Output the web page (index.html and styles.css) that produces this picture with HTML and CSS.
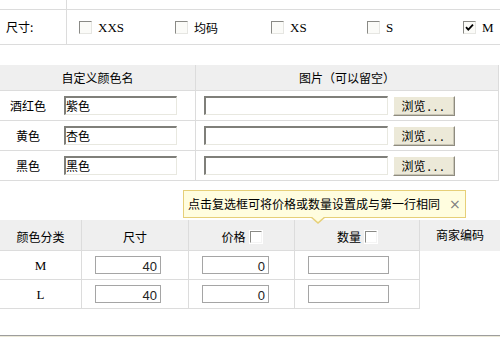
FILE: index.html
```html
<!DOCTYPE html>
<html lang="zh-CN">
<head>
<meta charset="utf-8">
<title>SKU</title>
<link rel="stylesheet" href="styles.css">
</head>
<body>
<div class="size-block">
  <div class="size-row size-row--top">
    <div class="size-label"></div>
    <div class="size-opts"></div>
  </div>
  <div class="size-row size-row--main">
    <div class="size-label">尺寸:</div>
    <div class="size-opts">
      <label class="opt"><span class="cb"></span><span class="latin">XXS</span></label>
      <label class="opt"><span class="cb"></span><span>均码</span></label>
      <label class="opt"><span class="cb"></span><span class="latin">XS</span></label>
      <label class="opt"><span class="cb"></span><span class="latin">S</span></label>
      <label class="opt"><span class="cb"><svg class="tick" width="9" height="9" viewBox="0 0 9 9"><path d="M1 4.2 L3.3 6.6 L8 1.6" fill="none" stroke="#000" stroke-width="1.8"/></svg></span><span class="latin">M</span></label>
    </div>
  </div>
</div>

<div class="color-table">
  <div class="ct-head">自定义颜色名</div>
  <div class="ct-head">图片（可以留空）</div>

  <div class="ct-cell"><span class="name-label">酒红色</span><span class="txt-input">紫色</span></div>
  <div class="ct-cell"><span class="file-input"></span><span class="btn">浏览<span class="dots">...</span></span></div>

  <div class="ct-cell"><span class="name-label">黄色</span><span class="txt-input">杏色</span></div>
  <div class="ct-cell"><span class="file-input"></span><span class="btn">浏览<span class="dots">...</span></span></div>

  <div class="ct-cell"><span class="name-label">黑色</span><span class="txt-input">黑色</span></div>
  <div class="ct-cell"><span class="file-input"></span><span class="btn">浏览<span class="dots">...</span></span></div>
</div>

<div class="tip-zone">
  <div class="tip">
    <span class="tip-text">点击复选框可将价格或数量设置成与第一行相同</span>
    <span class="tip-close">×</span>
    <span class="tip-arrow"></span>
  </div>
</div>

<div class="sku-table">
  <div class="sk-head">颜色分类</div>
  <div class="sk-head">尺寸</div>
  <div class="sk-head">价格 <span class="hcb"></span></div>
  <div class="sk-head">数量 <span class="hcb"></span></div>
  <div class="sk-head sk-head--last">商家编码</div>

  <div class="sk-cell sk-center latin">M</div>
  <div class="sk-cell"><span class="num-input w66">40</span></div>
  <div class="sk-cell"><span class="num-input w67">0</span></div>
  <div class="sk-cell"><span class="num-input w81"></span></div>
  <div class="sk-empty"></div>

  <div class="sk-cell sk-center latin">L</div>
  <div class="sk-cell"><span class="num-input w66">40</span></div>
  <div class="sk-cell"><span class="num-input w67">0</span></div>
  <div class="sk-cell"><span class="num-input w81"></span></div>
  <div class="sk-empty"></div>
</div>

<div class="footer-bar"></div>
</body>
</html>
```

FILE: styles.css
```css
* {
  box-sizing: border-box;
  margin: 0;
  padding: 0;
}

body {
  margin: 0;
  width: 500px;
  height: 337px;
  overflow: hidden;
  background: #fff;
  color: #000;
  font: 12px/1 "Noto Sans CJK SC", "Liberation Sans", sans-serif;
}

.latin {
  font-family: "Liberation Serif", serif;
  font-size: 13px;
}

/* size block */
.size-row {
  display: flex;
  border-bottom: 1px solid #dcdcdc;
}

.size-row--top {
  height: 10px;
}

.size-row--main {
  height: 35px;
}

.size-label {
  width: 67px;
  flex: none;
  border-right: 1px solid #dcdcdc;
  display: flex;
  align-items: center;
  padding-left: 6px;
}

.size-opts {
  flex: 1;
  min-width: 0;
  display: flex;
  align-items: center;
  padding-left: 12px;
}

.opt {
  width: 96px;
  flex: none;
  display: flex;
  align-items: center;
  gap: 6px;
  padding-top: 1px;
}

.opt:last-child {
  width: auto;
}

.cb {
  width: 13px;
  height: 13px;
  border: 1px solid;
  border-color: #8a8a86 #e6e6e2 #e6e6e2 #8a8a86;
  background: #fbfbf8;
  display: inline-flex;
  align-items: center;
  justify-content: center;
}

.tick {
  display: block;
}

/* color table */
.color-table {
  margin-top: 20px;
  width: 499px;
  display: grid;
  grid-template-columns: 196px 303px;
}

.ct-head {
  height: 26px;
  background: #efefef;
  border-right: 1px solid #dcdcdc;
  border-bottom: 1px solid #dcdcdc;
  display: flex;
  align-items: center;
  justify-content: center;
}

.ct-cell {
  height: 30px;
  border-right: 1px solid #dcdcdc;
  border-bottom: 1px solid #dcdcdc;
  display: flex;
  align-items: center;
}

.name-label {
  width: 56px;
  text-align: center;
}

.txt-input {
  margin-left: 8px;
  width: 113px;
  height: 19px;
  border-style: solid;
  border-width: 2px 1px 1px 2px;
  border-color: #7f7f7a #e8e8e0 #e8e8e0 #7f7f7a;
  background: #fff;
  display: flex;
  align-items: center;
  padding-left: 0;
}

.file-input {
  margin-left: 8px;
  width: 184px;
  height: 19px;
  border-style: solid;
  border-width: 2px 1px 1px 2px;
  border-color: #7f7f7a #e8e8e0 #e8e8e0 #7f7f7a;
  background: #fff;
}

.btn {
  margin-left: 5px;
  width: 62px;
  height: 20px;
  background: #ece9d8;
  border: 1px solid;
  border-color: #fff #8e8b7f #8e8b7f #fff;
  box-shadow: inset -1px -1px 0 #c9c6b6;
  display: flex;
  align-items: center;
  justify-content: center;
  padding-top: 1px;
}

.dots {
  letter-spacing: 3px;
  margin-left: 2px;
}

/* tooltip */
.tip-zone {
  position: relative;
  height: 39px;
}

.tip {
  position: absolute;
  top: 9px;
  left: 183px;
  width: 283px;
  height: 28px;
  background: #fffddf;
  border: 1px solid #e6cf78;
  display: flex;
  align-items: center;
  padding-left: 4px;
  z-index: 2;
}

.tip-text {
  white-space: nowrap;
}

.tip-close {
  margin-left: 9px;
  color: #7d7d7d;
  font-family: "DejaVu Sans", sans-serif;
  font-size: 14px;
}

.tip-arrow {
  position: absolute;
  left: 126px;
  bottom: -7px;
  width: 0;
  height: 0;
  border-left: 8px solid transparent;
  border-right: 8px solid transparent;
  border-top: 7px solid #e6cf78;
}

.tip-arrow::after {
  content: "";
  position: absolute;
  left: -7px;
  top: -8px;
  border-left: 7px solid transparent;
  border-right: 7px solid transparent;
  border-top: 6px solid #fffddf;
}

/* sku table */
.sku-table {
  display: grid;
  grid-template-columns: 82px 107px 106px 125px 80px;
}

.sk-head {
  height: 31px;
  background: #efefef;
  border-right: 1px solid #dcdcdc;
  border-bottom: 1px solid #dcdcdc;
  display: flex;
  align-items: center;
  justify-content: center;
  padding-top: 4px;
}

.sk-head--last {
  border-right: none;
  border-bottom-color: #efefef;
  padding-top: 0;
}

.hcb {
  width: 12px;
  height: 12px;
  margin-left: 4px;
  border: 1px solid;
  border-color: #8a8a86 #f4f4f4 #f4f4f4 #8a8a86;
  background: #fff;
  box-shadow: 0 0 0 1px #fff;
}

.sk-cell {
  height: 29px;
  border-right: 1px solid #dcdcdc;
  border-bottom: 1px solid #dcdcdc;
  display: flex;
  align-items: center;
  padding-left: 13px;
}

.sk-center {
  justify-content: center;
  padding-left: 0;
}

.sk-empty {
  height: 29px;
}

.num-input {
  height: 18px;
  border: 1px solid #a5a5a5;
  background: #fff;
  display: flex;
  align-items: center;
  justify-content: flex-end;
  padding-right: 3px;
  padding-top: 2px;
  font-family: "Liberation Sans", sans-serif;
  font-size: 13px;
  color: #222;
}

.w66 { width: 66px; }
.w67 { width: 67px; }
.w81 { width: 81px; }

.footer-bar {
  margin-top: 26px;
  height: 12px;
  border-top: 1px solid #9d9d9d;
  background: #ece9d8;
}
```
